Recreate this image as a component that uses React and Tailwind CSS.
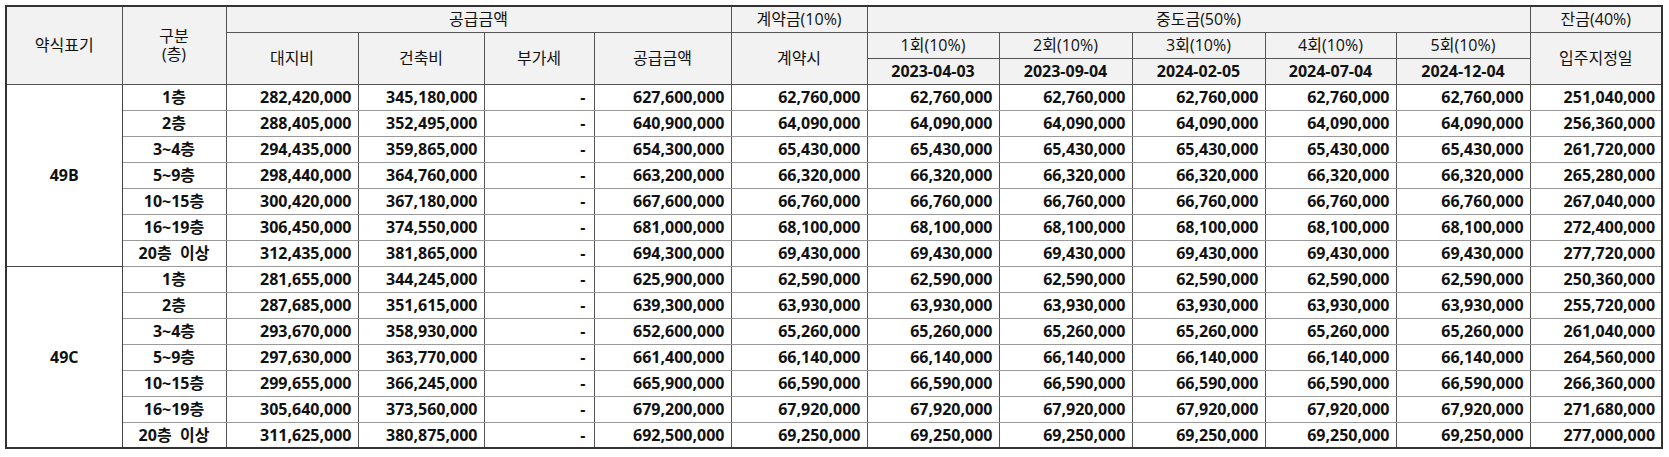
const widths = [116, 104, 132, 126, 110, 137, 136, 132, 133, 133, 131, 134, 132];

const groups = [
  {
    name: '49B',
    rows: [
      ['1층', '282,420,000', '345,180,000', '627,600,000', '62,760,000', '251,040,000'],
      ['2층', '288,405,000', '352,495,000', '640,900,000', '64,090,000', '256,360,000'],
      ['3~4층', '294,435,000', '359,865,000', '654,300,000', '65,430,000', '261,720,000'],
      ['5~9층', '298,440,000', '364,760,000', '663,200,000', '66,320,000', '265,280,000'],
      ['10~15층', '300,420,000', '367,180,000', '667,600,000', '66,760,000', '267,040,000'],
      ['16~19층', '306,450,000', '374,550,000', '681,000,000', '68,100,000', '272,400,000'],
      ['20층  이상', '312,435,000', '381,865,000', '694,300,000', '69,430,000', '277,720,000'],
    ],
  },
  {
    name: '49C',
    rows: [
      ['1층', '281,655,000', '344,245,000', '625,900,000', '62,590,000', '250,360,000'],
      ['2층', '287,685,000', '351,615,000', '639,300,000', '63,930,000', '255,720,000'],
      ['3~4층', '293,670,000', '358,930,000', '652,600,000', '65,260,000', '261,040,000'],
      ['5~9층', '297,630,000', '363,770,000', '661,400,000', '66,140,000', '264,560,000'],
      ['10~15층', '299,655,000', '366,245,000', '665,900,000', '66,590,000', '266,360,000'],
      ['16~19층', '305,640,000', '373,560,000', '679,200,000', '67,920,000', '271,680,000'],
      ['20층  이상', '311,625,000', '380,875,000', '692,500,000', '69,250,000', '277,000,000'],
    ],
  },
];

const thBase = 'border border-[#555] bg-[#f2f2f2] text-center p-0 leading-none';
const th = thBase + ' font-normal';
const thBold = thBase + ' font-bold';
const numCell = 'border-x border-y border-x-[#555] border-y-[#999] p-0 text-right font-bold leading-none';
const floorCell = 'border-x border-y border-x-[#555] border-y-[#999] p-0 text-center font-bold leading-none whitespace-pre';

const App = () => {
  return (
    <div className="bg-white w-[1669px] h-[457px] pl-[5px] pt-[5px] text-[#111] text-[16px] font-['Open_Sans','Noto_Sans_CJK_KR',sans-serif]">
      <table className="table-fixed border-collapse border-2 border-[#333] w-[1656px]">
        <colgroup>
          {widths.map((w, i) => (
            <col key={i} style={{ width: w }} />
          ))}
        </colgroup>
        <thead>
          <tr className="h-[26px]">
            <th rowSpan={3} className={th}>약식표기</th>
            <th rowSpan={3} className={th}>
              <div className="leading-[18px]">구분</div>
              <div className="leading-[18px]">(층)</div>
            </th>
            <th colSpan={4} className={th}>공급금액</th>
            <th className={th}>계약금(10%)</th>
            <th colSpan={5} className={th}>중도금(50%)</th>
            <th className={th}>잔금(40%)</th>
          </tr>
          <tr className="h-[26px]">
            <th rowSpan={2} className={th}>대지비</th>
            <th rowSpan={2} className={th}>건축비</th>
            <th rowSpan={2} className={th}>부가세</th>
            <th rowSpan={2} className={th}>공급금액</th>
            <th rowSpan={2} className={th}>계약시</th>
            <th className={th}>1회(10%)</th>
            <th className={th}>2회(10%)</th>
            <th className={th}>3회(10%)</th>
            <th className={th}>4회(10%)</th>
            <th className={th}>5회(10%)</th>
            <th rowSpan={2} className={th}>입주지정일</th>
          </tr>
          <tr className="h-[26px]">
            {['2023-04-03', '2023-09-04', '2024-02-05', '2024-07-04', '2024-12-04'].map((d) => (
              <th key={d} className={thBold}>{d}</th>
            ))}
          </tr>
        </thead>
        <tbody>
          {groups.map((g, gi) =>
            g.rows.map((r, ri) => {
              const sep = ri === 0 && gi > 0 ? ' border-t-[#444]' : '';
              return (
                <tr key={g.name + ri} className="h-[26px]">
                  {ri === 0 && (
                    <td rowSpan={g.rows.length} className={'border border-[#444] text-center font-bold p-0' + sep}>
                      {g.name}
                    </td>
                  )}
                  <td className={floorCell + sep}>{r[0]}</td>
                  {[r[1], r[2], '-', r[3], r[4], r[4], r[4], r[4], r[4], r[4], r[5]].map((v, ci) => (
                    <td key={ci} className={numCell + (ci === 2 ? ' pr-[8px]' : ' pr-[6px]') + sep}>
                      {v}
                    </td>
                  ))}
                </tr>
              );
            })
          )}
        </tbody>
      </table>
    </div>
  );
};

export default App;
